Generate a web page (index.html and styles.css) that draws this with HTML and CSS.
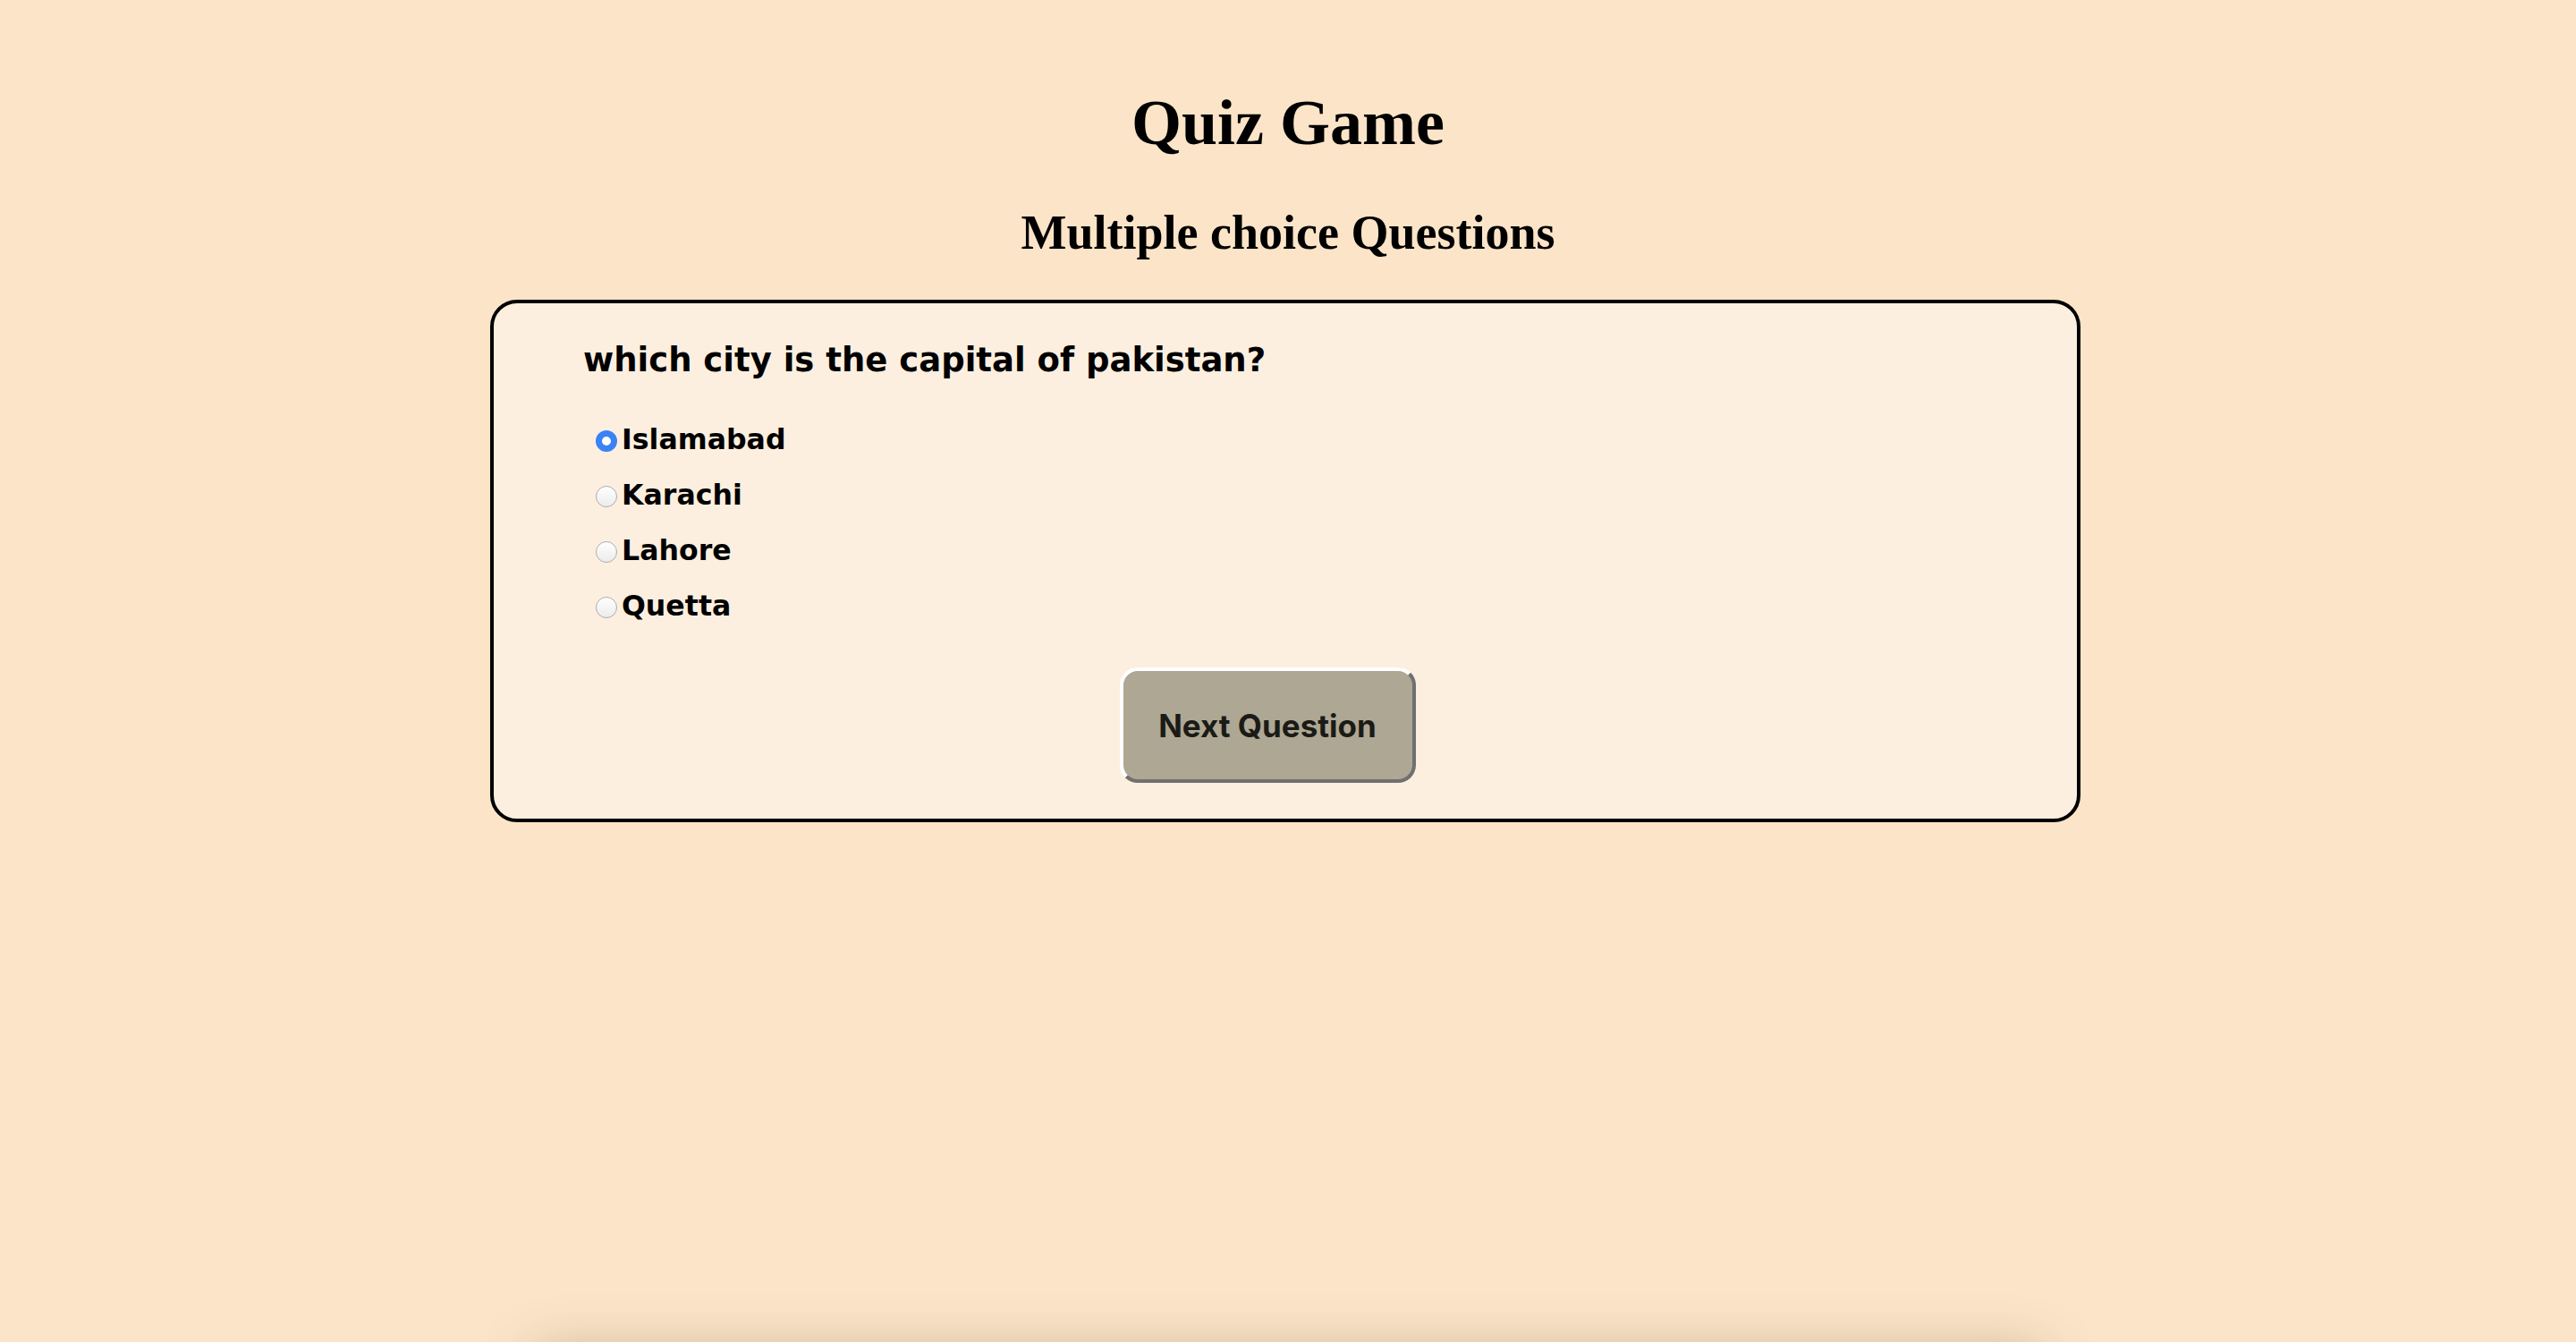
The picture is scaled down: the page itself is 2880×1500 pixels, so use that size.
FILE: index.html
```html
<!DOCTYPE html>
<html lang="en">
<head>
<meta charset="utf-8">
<title>Quiz Game</title>
<link rel="stylesheet" href="styles.css">
</head>
<body>
<h1 class="title">Quiz Game</h1>
<h2 class="subtitle">Multiple choice Questions</h2>
<div class="card">
  <h3 class="question">which city is the capital of pakistan?</h3>
  <div class="options">
    <label class="option"><input type="radio" name="answer" class="radio" checked><span>Islamabad</span></label>
    <label class="option"><input type="radio" name="answer" class="radio"><span>Karachi</span></label>
    <label class="option"><input type="radio" name="answer" class="radio"><span>Lahore</span></label>
    <label class="option"><input type="radio" name="answer" class="radio"><span>Quetta</span></label>
  </div>
  <div class="actions">
    <button class="next-btn" type="button">Next Question</button>
  </div>
</div>
<div class="result"></div>
</body>
</html>
```
FILE: styles.css
```css
html {
  overflow: hidden;
}
body {
  margin: 0;
  background: #fbe4c8;
  color: #000;
  font-family: "Liberation Serif", serif;
}
.title {
  margin: 96px 0 0;
  font-size: 72px;
  font-weight: 700;
  text-align: center;
  line-height: normal;
}
.subtitle {
  margin: 50px 0 0;
  font-size: 54px;
  font-weight: 700;
  text-align: center;
  line-height: normal;
}
.card {
  box-sizing: border-box;
  width: 1778px;
  margin: 44px 0 0 calc(50% - 892px);
  border: 4px solid #000;
  border-radius: 30px;
  background: #fcefdf;
  padding: 42px 140px 40px 100px;
  font-family: "DejaVu Sans", Verdana, sans-serif;
}
.question {
  margin: 0;
  font-size: 37px;
  font-weight: 700;
  line-height: normal;
}
.options {
  margin-top: 36px;
  display: flex;
  flex-direction: column;
}
.option {
  height: 62px;
  display: flex;
  align-items: center;
  font-size: 31.6px;
  font-weight: 700;
  padding-left: 14px;
}
.radio {
  appearance: none;
  -webkit-appearance: none;
  margin: 4px 5px 0 0;
  width: 24px;
  height: 24px;
  border-radius: 50%;
  border: 1px solid #acacac;
  background: linear-gradient(#ffffff, #ececec);
  box-sizing: border-box;
}
.radio:checked {
  border: 7px solid #3b82f6;
  background: #fff;
}
.actions {
  margin-top: 38px;
  display: flex;
  justify-content: center;
}
.next-btn {
  box-sizing: border-box;
  width: 331px;
  height: 129px;
  border: 4px solid;
  border-color: #ffffff #707070 #707070 #ffffff;
  border-radius: 20px;
  background: #aea794;
  color: #1b1b16;
  font-family: Inter, "Noto Sans", sans-serif;
  font-size: 35px;
  font-weight: 700;
}
.result {
  width: 1680px;
  height: 200px;
  margin: 600px auto 0;
  box-shadow: 0 0 60px rgba(110, 75, 30, 0.45);
}
```
